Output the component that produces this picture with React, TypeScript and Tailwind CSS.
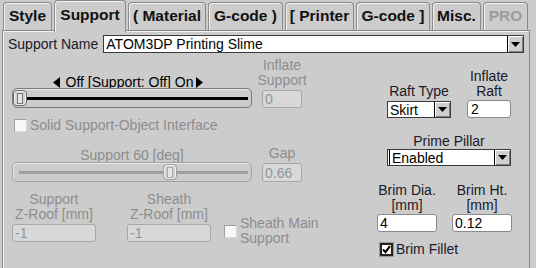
import React from 'react';

const tabs = [
  { label: 'Style', w: 'w-[49px]' },
  { label: 'Support', w: 'w-[72px]', active: true },
  { label: '( Material', w: 'w-[78px]' },
  { label: 'G-code )', w: 'w-[75px]' },
  { label: '[ Printer', w: 'w-[69px]' },
  { label: 'G-code ]', w: 'w-[74px]' },
  { label: 'Misc.', w: 'w-[49px]' },
  { label: 'PRO', w: 'w-[45px]', disabled: true },
];

function DownArrow() {
  return (
    <svg width="9" height="5" viewBox="0 0 9 5">
      <path d="M0 0 H9 L4.5 5 Z" fill="#000" />
    </svg>
  );
}

function Select({ value, className = '', focus = false }: { value: string; className?: string; focus?: boolean }) {
  return (
    <div className={`flex bg-white border border-[#3a3a3a] ${className}`}>
      <div className={`flex-1 flex items-center pl-[2px] leading-none text-black ${focus ? 'border-l border-black ml-[1px] pl-[1px]' : ''}`}>{value}</div>
      <div className="w-[16px] bg-[#cfcfcf] border-l border-black shadow-[inset_1px_1px_0_#ffffff,inset_-1px_-1px_0_#808080] flex items-center justify-center">
        <DownArrow />
      </div>
    </div>
  );
}

function Input({ value, disabled = false, className = '' }: { value: string; disabled?: boolean; className?: string }) {
  return (
    <div
      className={`h-[18px] rounded-[3px] border flex items-center pl-[2px] leading-none ${
        disabled ? 'bg-[#d8d8d8] border-[#a8a8a8] text-[#8a96a4]' : 'bg-white border-[#8a8a8a] text-black'
      } ${className}`}
    >
      {value}
    </div>
  );
}

function Check({ checked = false, disabled = false }: { checked?: boolean; disabled?: boolean }) {
  return (
    <div
      className={`w-[13px] h-[13px] shrink-0 flex items-center justify-center ${
        disabled ? 'bg-[#f8f8f8] border border-[#a0a0a0] border-r-[#d8d8d8] border-b-[#d8d8d8]' : 'bg-white border-2 border-[#222] outline outline-1 outline-[#9a9a9a]'
      }`}
    >
      {checked && (
        <svg width="9" height="9" viewBox="0 0 9 9">
          <path d="M1 4.5 L3.5 7.2 L8 1.2" stroke="#000" strokeWidth="2" fill="none" />
        </svg>
      )}
    </div>
  );
}

function Slider({ thumb, disabled = false, className = '' }: { thumb: string; disabled?: boolean; className?: string }) {
  return (
    <div
      className={`relative w-[240px] h-[20px] rounded-[5px] border shadow-[inset_1px_1px_0_#e8e8e8] ${
        disabled ? 'border-[#a4a4a4]' : 'border-[#7a7a7a]'
      } ${className}`}
    >
      <div className={`absolute left-[6px] right-[3px] top-[8px] h-[3px] ${disabled ? 'bg-[#a0a0a0]' : 'bg-black'}`} />
      <div
        className={`absolute top-[1px] ${thumb} w-[14px] h-[16px] rounded-[4px] border bg-[#d2d2d2] shadow-[inset_0_0_0_1px_#f2f2f2] flex items-center justify-center ${
          disabled ? 'border-[#a0a0a0]' : 'border-[#6a6a6a]'
        }`}
      >
        <div className={`w-[6px] h-[11px] border bg-[#e6e6e6] ${disabled ? 'border-[#a8a8a8]' : 'border-[#777]'}`} />
      </div>
    </div>
  );
}

function Tri({ left }: { left?: boolean }) {
  return (
    <svg width="7" height="11" viewBox="0 0 7 11">
      <path d={left ? 'M7 0 V11 L0 5.5 Z' : 'M0 0 V11 L7 5.5 Z'} fill="#000" />
    </svg>
  );
}

export default function App() {
  return (
    <div className="w-[536px] h-[268px] overflow-hidden bg-[#cccccc] font-['Liberation_Sans',Arial,sans-serif] text-[14px] text-[#1a1a2a]">
      {/* tab strip */}
      <div className="flex items-end h-[30px] pl-[3px] gap-[2px]">
        {tabs.map(t =>
          t.active ? (
            <div key={t.label} className={`relative z-10 h-[32px] -mb-[2px] ${t.w} rounded-t-[4px] border border-b-0 border-[#8a8a8a] bg-[#cccccc] shadow-[inset_1px_1px_0_#f2f2f2] pt-[6px] text-center font-bold text-[15.5px] leading-[16px] text-[#111]`}>
              {t.label}
            </div>
          ) : (
            <div key={t.label} className={`h-[28px] ${t.w} rounded-t-[4px] border border-b-0 border-[#8a8a8a] shadow-[inset_1px_1px_0_#f2f2f2] pt-[5px] text-center font-bold text-[15.5px] leading-[16px] whitespace-nowrap ${t.disabled ? 'text-[#9c9c9c]' : 'text-[#111]'}`}>
              {t.label}
            </div>
          )
        )}
      </div>

      {/* panel */}
      <div className="ml-[2px] w-[528px] h-[240px] border border-[#8a8a8a] shadow-[inset_1px_1px_0_#f2f2f2]">
        <div className="flex items-center pt-[4px] pl-[5px] pr-[5px]">
          <span className="leading-none">Support Name</span>
          <Select value="ATOM3DP Printing Slime" className="ml-[5px] flex-1 h-[18px]" />
        </div>

        <div className="flex items-start pl-[9px]">
          {/* left column */}
          <div className="w-[365px] mt-[5px] flex flex-col items-start">
            <div className="flex items-end gap-[10px]">
              <div className="w-[240px] flex flex-col">
                <div className="flex items-center justify-center pr-[8px] leading-[15px] text-black">
                  <Tri left />
                  <span className="ml-[6px] mr-[3px]">Off [Support: Off] On</span>
                  <Tri />
                </div>
                <Slider thumb="left-[0px]" className="-mt-[2px]" />
              </div>
              <div className="w-[40px] flex flex-col items-center">
                <div className="text-center leading-[15px] text-[#8c8c8c] whitespace-nowrap">Inflate<br />Support</div>
                <Input value="0" disabled className="w-full mt-[2px]" />
              </div>
            </div>

            <div className="flex items-center mt-[10px] ml-[2px]">
              <Check disabled />
              <span className="ml-[3px] leading-none text-[#8c8c8c]">Solid Support-Object Interface</span>
            </div>

            <div className="flex items-end gap-[10px] mt-[14px]">
              <div className="w-[240px] flex flex-col">
                <div className="text-center leading-[15px] text-[#8c8c8c]">Support 60 [deg]</div>
                <Slider thumb="left-[150px]" disabled className="-mt-[1px]" />
              </div>
              <div className="w-[40px] flex flex-col items-center">
                <div className="text-center leading-[15px] text-[#8c8c8c]">Gap</div>
                <Input value="0.66" disabled className="w-full mt-[2px] h-[19px]" />
              </div>
            </div>

            <div className="flex items-end mt-[10px]">
              <div className="w-[84px] flex flex-col items-center">
                <div className="text-center leading-[15px] text-[#8c8c8c] whitespace-nowrap">Support<br />Z-Roof [mm]</div>
                <Input value="-1" disabled className="w-full mt-[2px]" />
              </div>
              <div className="w-[84px] ml-[31px] flex flex-col items-center">
                <div className="text-center leading-[15px] text-[#8c8c8c] whitespace-nowrap">Sheath<br />Z-Roof [mm]</div>
                <Input value="-1" disabled className="w-full mt-[2px]" />
              </div>
              <div className="flex items-center ml-[13px] -mb-[4px]">
                <Check disabled />
                <div className="ml-[3px] leading-[15px] text-[#8c8c8c] whitespace-nowrap">Sheath Main<br />Support</div>
              </div>
            </div>
          </div>

          {/* right column */}
          <div className="mt-[16px] flex flex-col items-start text-[#1a1a2a]">
            <div className="flex items-end ml-[10px] gap-[16px]">
              <div className="w-[64px] flex flex-col items-center">
                <div className="leading-[15px] whitespace-nowrap">Raft Type</div>
                <Select value="Skirt" className="w-full h-[17px] mt-[2px]" />
              </div>
              <div className="w-[44px] flex flex-col items-center">
                <div className="text-center leading-[15px]">Inflate<br />Raft</div>
                <Input value="2" className="w-full mt-[1px] pl-[3px]" />
              </div>
            </div>

            <div className="ml-[10px] w-[124px] flex flex-col items-center mt-[16px]">
              <div className="leading-[15px] whitespace-nowrap">Prime Pillar</div>
              <Select value="Enabled" focus className="w-full h-[17px]" />
            </div>

            <div className="flex items-end gap-[15px] mt-[17px]">
              <div className="w-[60px] flex flex-col items-center">
                <div className="text-center leading-[15px] whitespace-nowrap">Brim Dia.<br />[mm]</div>
                <Input value="4" className="w-full mt-[1px]" />
              </div>
              <div className="w-[60px] flex flex-col items-center">
                <div className="text-center leading-[15px] whitespace-nowrap">Brim Ht.<br />[mm]</div>
                <Input value="0.12" className="w-full mt-[1px]" />
              </div>
            </div>

            <div className="flex items-center ml-[3px] mt-[10px]">
              <Check checked />
              <span className="ml-[3px] leading-none">Brim Fillet</span>
            </div>
          </div>
        </div>
      </div>
    </div>
  );
}
